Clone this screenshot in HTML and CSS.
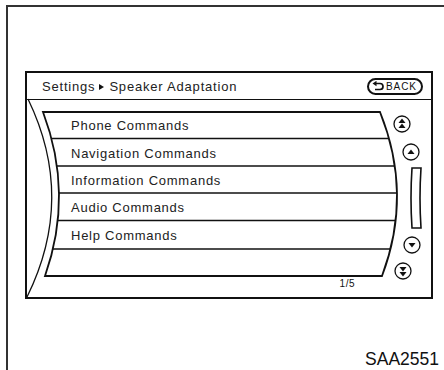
FILE: index.html
```html
<!DOCTYPE html>
<html lang="en">
<head>
  <meta charset="UTF-8">
  <meta name="viewport" content="width=device-width, initial-scale=1.0">
  <link rel="stylesheet" href="styles.css">
</head>
<body>
  <div class="sheet">
    <div class="screen">
      <div class="screen-head">
        <span class="crumb">Settings<span class="crumb-arrow"></span>Speaker Adaptation</span>
        <span class="back-btn">
          <svg class="back-icon" width="12" height="10" viewBox="0 0 12 10">
            <path d="M4 2.5 H8 A3 3 0 0 1 8 8.5 H3" fill="none" stroke="#111" stroke-width="1.7"/>
            <polygon points="0.5,2.5 4.5,-0.2 4.5,5.2" fill="#111"/>
          </svg>BACK
        </span>
      </div>
      <div class="screen-body">
        <ul class="menu">
          <li>Phone Commands</li>
          <li>Navigation Commands</li>
          <li>Information Commands</li>
          <li>Audio Commands</li>
          <li>Help Commands</li>
          <li></li>
        </ul>
        <div class="page-count">1/5</div>
      </div>

      <!-- curved bezel, row rules and scroll buttons -->
      <svg class="screen-art" width="408" height="228" viewBox="25 71 408 228">
        <defs>
          <clipPath id="barrel-clip">
            <path d="M43 112 L380 112 Q413 194 382 276 L45 276 Q74 194 43 112 Z"/>
          </clipPath>
        </defs>
        <path d="M28 99 Q76 198 27 297" fill="none" stroke="#111" stroke-width="1.3"/>
        <path d="M43 112 L380 112 Q413 194 382 276 L45 276 Q74 194 43 112 Z" fill="none" stroke="#111" stroke-width="1.8"/>
        <g clip-path="url(#barrel-clip)" stroke="#111" stroke-width="1.5">
          <line x1="30" y1="138.5" x2="420" y2="138.5"/>
          <line x1="30" y1="166" x2="420" y2="166"/>
          <line x1="30" y1="193" x2="420" y2="193"/>
          <line x1="30" y1="220.5" x2="420" y2="220.5"/>
          <line x1="30" y1="249" x2="420" y2="249"/>
        </g>

        <g fill="none" stroke="#111" stroke-width="1.3">
          <circle cx="402" cy="124" r="8"/>
          <circle cx="411" cy="152" r="8"/>
          <circle cx="412" cy="245" r="8"/>
          <circle cx="403" cy="271" r="8"/>
          <path d="M412 168 L421 168 Q419 198 421 228 L412 228 Q410 198 412 168 Z" stroke-width="1.6"/>
        </g>
        <g fill="#111">
          <polygon points="398.5,123 402,118.5 405.5,123"/>
          <polygon points="398.5,128 402,123.5 405.5,128"/>
          <polygon points="407.5,154 411,149.5 414.5,154"/>
          <polygon points="408.5,243 415.5,243 412,247.5"/>
          <polygon points="399.5,267 406.5,267 403,271.5"/>
          <polygon points="399.5,272 406.5,272 403,276.5"/>
        </g>
      </svg>
    </div>
    <div class="fig-id">SAA2551</div>
  </div>
</body>
</html>
```

FILE: styles.css
```css
body {
  font-family: 'Liberation Sans', Arial, sans-serif;
  margin: 0;
  padding: 0;
  background-color: #fff;
  color: #111;
}

.sheet {
  margin: 5px 0 0 6px;
  min-height: calc(100vh - 5px);
  box-sizing: border-box;
  padding: 64px 0 0 17px;
  border-top: 2px solid #333;
  border-left: 2px solid #333;
}

.screen {
  position: relative;
  width: 408px;
  height: 228px;
  box-sizing: border-box;
  border: 2px solid #111;
}

.screen-head {
  display: flex;
  justify-content: space-between;
  align-items: center;
  height: 26px;
  padding: 0 8px 0 15px;
  border-bottom: 1px solid #111;
}

.crumb {
  font-size: 13px;
  letter-spacing: 0.8px;
  color: #222;
}

.crumb-arrow {
  display: inline-block;
  width: 0;
  height: 0;
  margin: 0 5px 0 4px;
  border-left: 5px solid #111;
  border-top: 3px solid transparent;
  border-bottom: 3px solid transparent;
  vertical-align: 1px;
}

.back-btn {
  display: flex;
  align-items: center;
  gap: 2px;
  width: 56px;
  height: 17px;
  box-sizing: border-box;
  padding-left: 3px;
  border: 2px solid #111;
  border-radius: 9px;
  font-size: 10px;
  letter-spacing: 0.9px;
}

.back-icon {
  display: block;
}

.screen-body {
  padding-top: 12px;
}

.menu {
  list-style: none;
  margin: 0;
  padding: 0;
}

.menu li {
  display: flex;
  align-items: center;
  height: 27.4px;
  padding-left: 44px;
  font-size: 13px;
  letter-spacing: 0.75px;
  color: #222;
}

.page-count {
  height: 16px;
  line-height: 16px;
  padding-right: 76px;
  text-align: right;
  font-size: 10px;
  letter-spacing: 0.5px;
}

.screen-art {
  position: absolute;
  top: -2px;
  left: -2px;
  pointer-events: none;
}

.fig-id {
  margin-top: 50px;
  padding-right: 5px;
  text-align: right;
  font-size: 17.5px;
  line-height: 20px;
}
```
